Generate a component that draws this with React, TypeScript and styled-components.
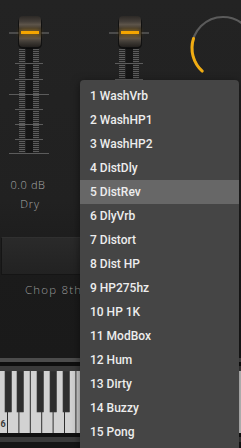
import styled, { createGlobalStyle } from "styled-components";

const GlobalStyle = createGlobalStyle`
  html, body {
    margin: 0;
    padding: 0;
    background: #1c1c1c;
  }
`;

const Screen = styled.div`
  position: relative;
  width: 241px;
  height: 448px;
  overflow: hidden;
  background: linear-gradient(180deg, #232323 0%, #212121 45%, #1b1b1b 60%, #191919 100%);
  font-family: "Open Sans", "DejaVu Sans", sans-serif;
`;

const TopRow = styled.div`
  display: flex;
  align-items: flex-start;
  height: 237px;
`;

const FaderColumn = styled.div<{ $offset: number }>`
  display: flex;
  flex-direction: column;
  align-items: center;
  width: 60px;
  margin-left: ${({ $offset }) => $offset}px;
  flex-shrink: 0;
`;

const FaderValue = styled.div`
  margin-top: 18px;
  margin-left: -4px;
  font-size: 11px;
  font-weight: 300;
  letter-spacing: 0.6px;
  color: #a9a9a9;
  line-height: 14px;
`;

const FaderName = styled.div`
  margin-top: 5px;
  font-size: 11px;
  font-weight: 300;
  letter-spacing: 0.8px;
  color: #a9a9a9;
  line-height: 14px;
`;

const KnobSlot = styled.div`
  margin-left: 30px;
  margin-top: 13px;
  width: 70px;
  height: 70px;
  flex-shrink: 0;
`;

const PadButton = styled.div`
  margin-left: 1px;
  width: 160px;
  height: 38px;
  box-sizing: border-box;
  border: 1px solid #151515;
  border-top-color: #303030;
  background: linear-gradient(180deg, #2a2a2a 0%, #222222 100%);
`;

const PadLabel = styled.div`
  margin: 7px 0 0 25px;
  font-size: 11.5px;
  font-weight: 300;
  letter-spacing: 1.2px;
  color: #9a9a9a;
  line-height: 15px;
  white-space: nowrap;
`;

const KeyboardStrip = styled.div`
  position: absolute;
  left: 0;
  right: 0;
  bottom: 0;
  height: 92px;
  display: flex;
  flex-direction: column;
`;

const Band = styled.div<{ $h: number; $c: string }>`
  height: ${({ $h }) => $h}px;
  background: ${({ $c }) => $c};
  flex-shrink: 0;
`;

const Menu = styled.div`
  position: absolute;
  left: 80px;
  top: 80px;
  width: 159px;
  height: 380px;
  padding-top: 4px;
  box-sizing: border-box;
  background: #454545;
  border-radius: 4px 4px 0 0;
  box-shadow: 0 2px 8px rgba(0, 0, 0, 0.5);
  font-family: Roboto, "Liberation Sans", sans-serif;
`;

const MenuItem = styled.div<{ $active?: boolean }>`
  height: 24px;
  line-height: 24px;
  padding-left: 10px;
  font-size: 12px;
  font-weight: 500;
  color: #ededed;
  background: ${({ $active }) => ($active ? "#676767" : "transparent")};
`;

const items = [
  "1 WashVrb",
  "2 WashHP1",
  "3 WashHP2",
  "4 DistDly",
  "5 DistRev",
  "6 DlyVrb",
  "7 Distort",
  "8 Dist HP",
  "9 HP275hz",
  "10 HP 1K",
  "11 ModBox",
  "12 Hum",
  "13 Dirty",
  "14 Buzzy",
  "15 Pong",
];

function Fader({ id }: { id: string }) {
  const ticks: JSX.Element[] = [];
  for (let y = 49; y <= 152; y += 2) {
    ticks.push(<line key={"l" + y} x1={19} x2={25} y1={y + 0.5} y2={y + 0.5} />);
    ticks.push(<line key={"r" + y} x1={33} x2={39} y1={y + 0.5} y2={y + 0.5} />);
  }
  const longs = [63, 79, 109, 124, 139];
  return (
    <svg width={60} height={160} viewBox="0 0 60 160">
      <defs>
        <linearGradient id={id + "cap"} x1="0" y1="0" x2="0" y2="1">
          <stop offset="0" stopColor="#2c2926" />
          <stop offset="0.18" stopColor="#453f39" />
          <stop offset="0.28" stopColor="#5e554b" />
          <stop offset="0.4" stopColor="#3a3631" />
          <stop offset="0.6" stopColor="#3a3631" />
          <stop offset="0.72" stopColor="#5a5148" />
          <stop offset="0.86" stopColor="#3b3732" />
          <stop offset="1" stopColor="#24211e" />
        </linearGradient>
        <filter id={id + "glow"} x="-50%" y="-200%" width="200%" height="500%">
          <feGaussianBlur stdDeviation="2" />
        </filter>
      </defs>
      <rect x={26} y={48} width={7} height={106} fill="#161616" />
      <g stroke="#5c5c5c" strokeWidth={1}>
        {ticks}
        {longs.map((y) => (
          <line key={y} x1={15} x2={43} y1={y + 0.5} y2={y + 0.5} />
        ))}
        <line x1={9} x2={49} y1={94.5} y2={94.5} />
        <line x1={9} x2={49} y1={153.5} y2={153.5} />
      </g>
      <line x1={9} x2={49} y1={33} y2={33} stroke="#5a5a5a" strokeWidth={1.5} />
      <rect x={18} y={17} width={24} height={32} rx={5} fill="#000" opacity={0.5} />
      <rect x={19} y={16} width={22} height={31} rx={4} fill={`url(#${id}cap)`} />
      <rect x={20} y={29} width={20} height={7} fill="#f0a000" opacity={0.35} filter={`url(#${id}glow)`} />
      <rect x={21} y={31} width={18} height={3} fill="#f5a500" />
    </svg>
  );
}

function Knob() {
  const cx = 33;
  const cy = 35;
  const r = 31;
  const pt = (deg: number) => {
    const a = (deg * Math.PI) / 180;
    return `${cx + r * Math.cos(a)} ${cy + r * Math.sin(a)}`;
  };
  return (
    <svg width={70} height={70} viewBox="0 0 70 70" overflow="visible">
      <path d={`M ${pt(135)} A ${r} ${r} 0 1 1 ${pt(45)}`} fill="none" stroke="#5b5b5b" strokeWidth={2.2} />
      <path d={`M ${pt(132)} A ${r} ${r} 0 0 1 ${pt(198)}`} fill="none" stroke="#f0ac12" strokeWidth={3} strokeLinecap="round" />
    </svg>
  );
}

function Keyboard() {
  const w = 11.4;
  const start = -3.4;
  const whites: JSX.Element[] = [];
  const blacks: JSX.Element[] = [];
  const blackAfter = [1, 1, 0, 1, 1, 1, 0];
  const offsets = [0, 0.6, 0, -2.2, -0.6, 1, 0];
  for (let i = 0; i < 22; i++) {
    const x = start + i * w;
    whites.push(<rect key={"w" + i} x={x} y={0} width={w - 1} height={62} fill="#d2d2d2" />);
    const n = i % 7;
    if (blackAfter[n]) {
      const bx = x + w - 3 + offsets[n];
      blacks.push(<rect key={"b" + i} x={bx} y={0} width={6.5} height={41} fill="#2e2e2e" stroke="#3d3d3d" strokeWidth={0.6} />);
    }
  }
  return (
    <svg width={241} height={62} viewBox="0 0 241 62" style={{ display: "block", background: "#2e2e2e" }}>
      {whites}
      {blacks}
      <text x={0.5} y={56} fontSize={9} fontFamily="Roboto, sans-serif" fontWeight={700} fill="#3a3a3a">6</text>
    </svg>
  );
}

export default function App() {
  return (
    <>
      <GlobalStyle />
      <Screen>
        <TopRow>
          <FaderColumn $offset={0}>
            <Fader id="f1" />
            <FaderValue>0.0 dB</FaderValue>
            <FaderName>Dry</FaderName>
          </FaderColumn>
          <FaderColumn $offset={40}>
            <Fader id="f2" />
          </FaderColumn>
          <KnobSlot>
            <Knob />
          </KnobSlot>
        </TopRow>
        <PadButton />
        <PadLabel>Chop 8th</PadLabel>
        <KeyboardStrip>
          <Band $h={2} $c="#1a1a1a" />
          <Band $h={4} $c="#4c4c4c" />
          <Band $h={4} $c="#0f0f0f" />
          <Band $h={5} $c="#3a3a3a" />
          <Keyboard />
          <Band $h={4} $c="#101010" />
          <Band $h={5} $c="#3b3b3b" />
          <Band $h={6} $c="#161616" />
        </KeyboardStrip>
        <Menu>
          {items.map((t, i) => (
            <MenuItem key={t} $active={i === 4}>
              {t}
            </MenuItem>
          ))}
        </Menu>
      </Screen>
    </>
  );
}
